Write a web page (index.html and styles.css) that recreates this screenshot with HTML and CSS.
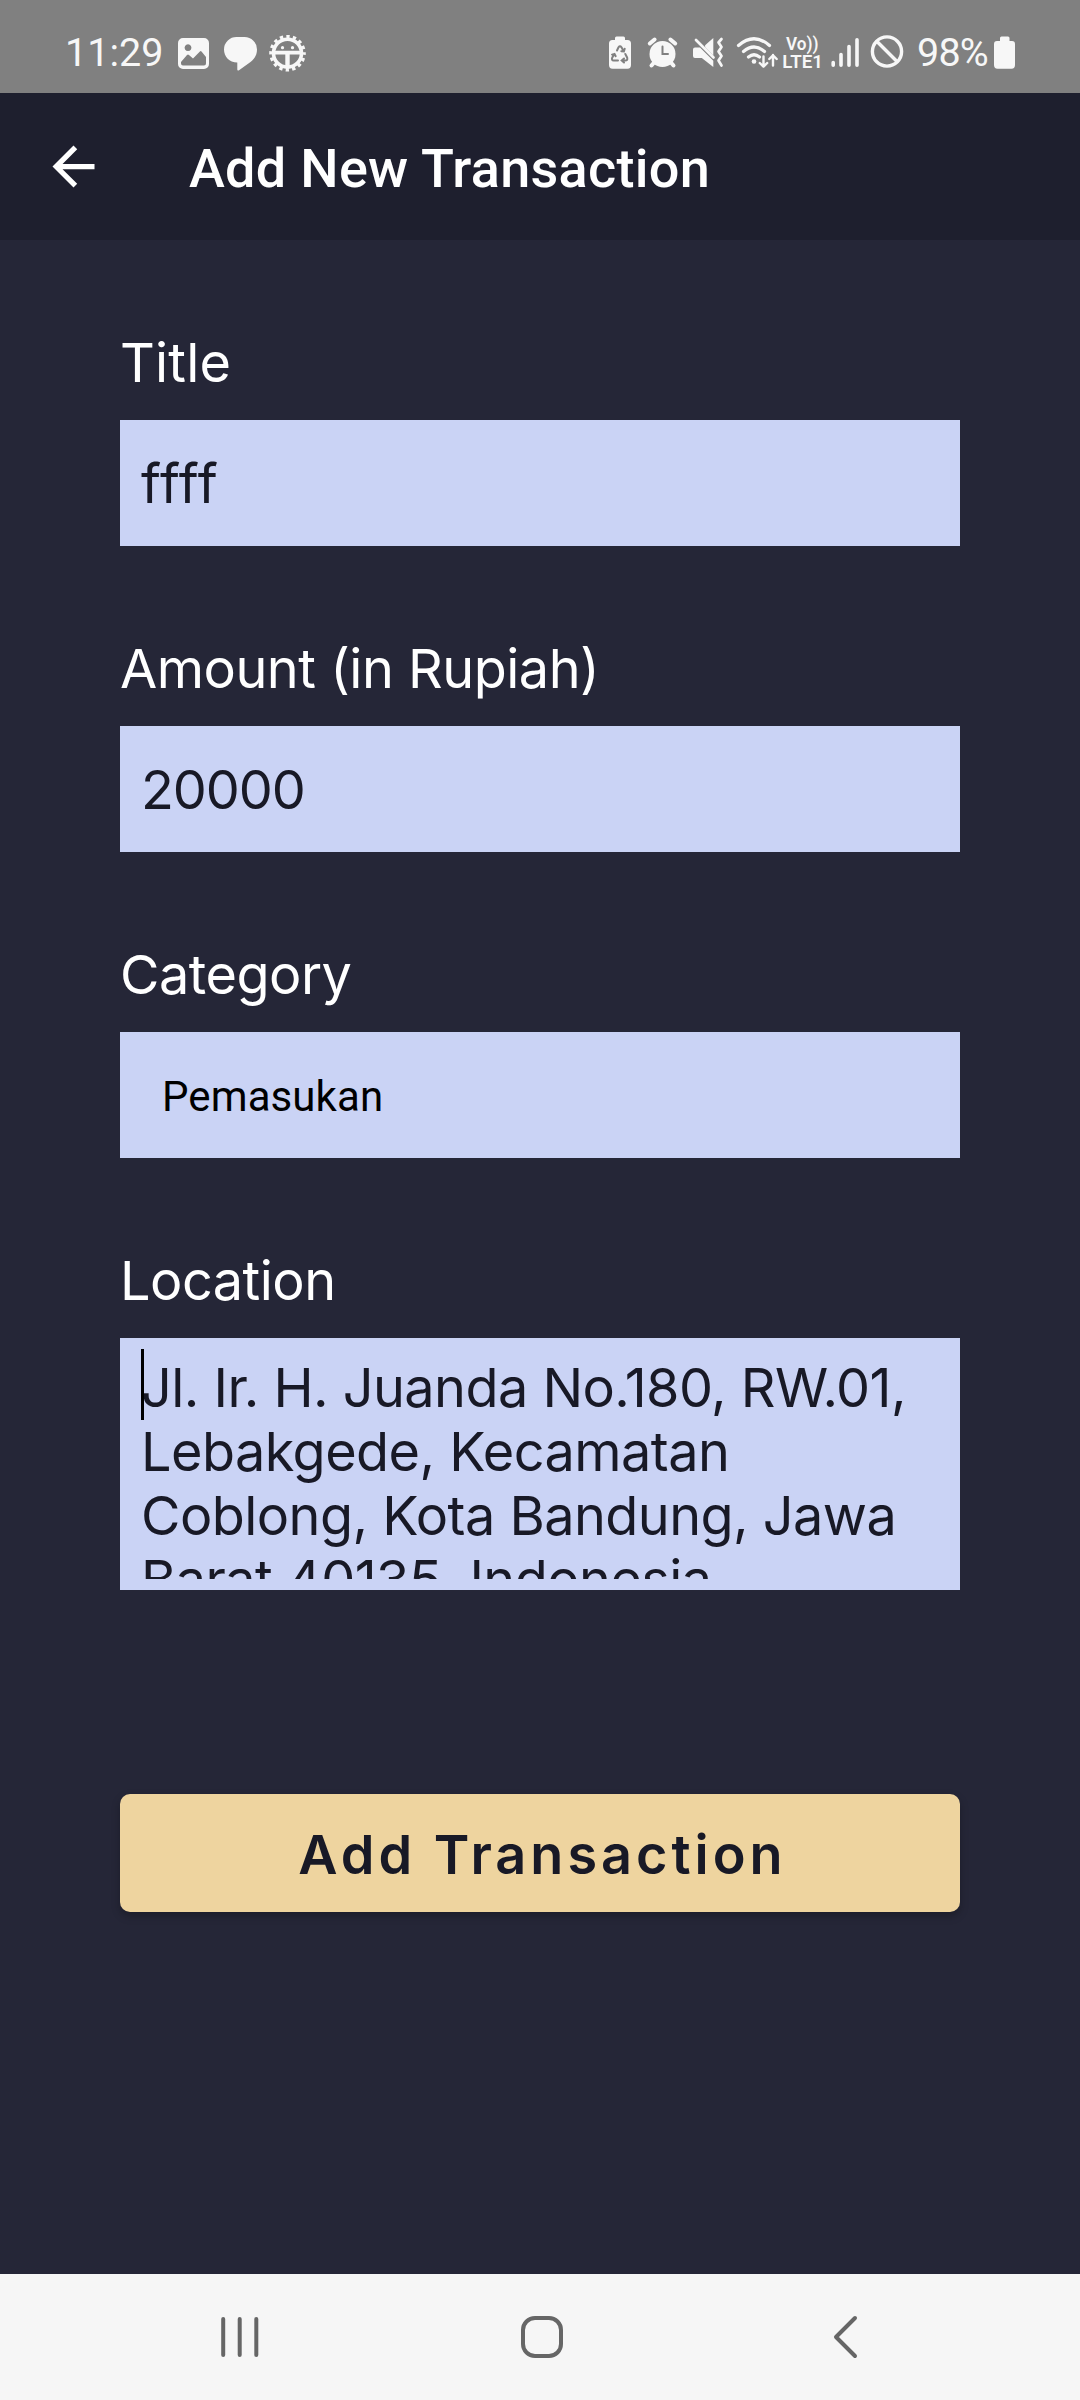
FILE: index.html
```html
<!DOCTYPE html>
<html lang="en">
<head>
<meta charset="utf-8">
<title>Add New Transaction</title>
<link rel="stylesheet" href="styles.css">
</head>
<body>
<div class="screen">
  <div class="status-bar">
    <div class="status-group">
      <span class="clock">11:29</span>
      <svg class="status-icon" width="31" height="93" viewBox="178 0 31 93">
        <path fill-rule="evenodd" d="M183 38h21a5 5 0 0 1 5 5v21a5 5 0 0 1-5 5h-21a5 5 0 0 1-5-5V43a5 5 0 0 1 5-5zM188 44.300a3.400 3.400 0 1 0 .01 0zM181 62v1.500q0 2 2 2h21q2 0 2-2V57l-4.500-5.500q-.8-.8-1.600 0L193 58.500l-4-3.500q-1-.8-2 0z"/>
      </svg>
      <svg class="status-icon" width="34" height="93" viewBox="224 0 34 93">
        <path d="M237 37h7.500a12.500 12.500 0 0 1 12.500 12.500c0 5.500-2.500 9-6.500 12.500l-11.500 8.200c-1 .6-1.700 0-1.700-1v-6.700c-8 0-13.300-6-13.300-13a12.500 12.500 0 0 1 13-12.500z"/>
      </svg>
      <svg class="status-icon" width="37" height="93" viewBox="269 0 37 93">
        <g transform="translate(287.500 53.200)">
          <circle r="14" fill="none" stroke="#f7f7f7" stroke-width="3.600"/>
          <circle r="16.400" fill="none" stroke="#f7f7f7" stroke-width="3.800" stroke-dasharray="3.300 3.140" stroke-dashoffset="1.650"/>
          <path d="M-13-2.400h26v3.800H2.200v12h-4.400v-12H-13z"/>
          <circle cx="-5" cy="-5.500" r="1.600"/><circle cx="5" cy="-5.500" r="1.600"/>
        </g>
      </svg>
    </div>
    <div class="status-group">
      <svg class="status-icon recycle" width="22" height="93" viewBox="609 0 22 93">
        <path d="M615 40v-2q0-1.500 1.500-1.500h7q1.500 0 1.500 1.500v2h2.500q3.500 0 3.500 3.500V65q0 3.700-3.500 3.700h-15Q609 68.700 609 65V43.500q0-3.500 3.500-3.500z"/>
        <path class="cut" d="M617 50.500l1.500-3.200q1.500-2 3 0l2 3.700M625.300 54l1.900 3.700q.7 2.800-2 2.800h-3.500M618 60.500h-4.200q-2.600-.3-1.600-2.800l2-3.700M621.300 51.200l2.600.2.800-2.700M624 58.500l-2.300 2 2.300 2M612 54.600l2.500-.7 1.200 2.300"/>
      </svg>
      <svg class="status-icon alarm" width="30" height="93" viewBox="648 0 30 93">
        <circle cx="662.500" cy="54" r="13"/>
        <path class="line" stroke-width="4" d="M649.800 43.500l4.800-4M675.200 43.500l-4.800-4M654.500 62l-3 3.500M670.500 62l3 3.500"/>
        <path class="cut" stroke-width="2.600" d="M662.500 46.500v7.500h5.500"/>
      </svg>
      <svg class="status-icon mute" width="31" height="93" viewBox="693 0 31 93">
        <path d="M695 47.500h5l13.300 13.300V67l-11.500-9H695q-2 0-2-2v-6.500q0-2 2-2zM713.300 38v17.500l-8.200-8.200 0-2z"/>
        <path class="line" stroke-width="2.700" d="M696 40l17.500 17.500M721.500 39l-3 3.500 3 4.500-3 4.500 3 4.500-3 4.500 3 5"/>
      </svg>
      <svg class="status-icon wifi" width="43" height="93" viewBox="736 0 43 93">
        <path class="line" stroke-width="3.200" d="M738.500 45.500q15.500-13.500 31 0M743.500 51.500q10.500-9 21 0M748.500 57q5.500-4.500 11 0"/>
        <circle cx="754" cy="61.500" r="2.300"/>
        <path class="line" stroke-width="2.400" d="M763.500 56.500v10M759.800 63l3.700 3.700 3.700-3.700M773 65.500V55M769.300 59l3.700-3.700 3.700 3.700"/>
      </svg>
      <svg class="status-icon volte" width="40" height="93" viewBox="783 0 40 93">
        <text x="786" y="50" font-size="18" textLength="32.500" lengthAdjust="spacingAndGlyphs">Vo))</text>
        <text x="782.300" y="67.800" font-size="18.500" textLength="40.700" lengthAdjust="spacingAndGlyphs">LTE1</text>
      </svg>
      <svg class="status-icon signal" width="28" height="93" viewBox="831 0 28 93">
        <path class="line" stroke-width="3.600" d="M833.200 62.500v2.800M841 54.500v10.800M849 46.500v18.800M857 39.800v25.500"/>
      </svg>
      <svg class="status-icon blocked" width="34" height="93" viewBox="870 0 34 93">
        <circle cx="887" cy="51.500" r="14.600" fill="none" stroke="#f7f7f7" stroke-width="3.400"/>
        <path class="line" stroke-width="3.400" d="M877 41.500l20 20"/>
      </svg>
      <span class="percent">98%</span>
      <svg class="status-icon" width="21" height="93" viewBox="994 0 21 93">
        <path d="M1000 41v-3q0-1.500 1.500-1.500h6.500q1.500 0 1.500 1.500v3h2.500q3 0 3 3v21q0 3.700-3.500 3.700h-14q-3.500 0-3.500-3.700V44q0-3 3-3z"/>
      </svg>
    </div>
  </div>

  <header class="app-bar">
    <svg class="back" width="63" height="63" viewBox="0 0 24 24"><path d="M20 11H7.830l5.590-5.590L12 4l-8 8 8 8 1.410-1.410L7.830 13H20v-2z"/></svg>
    <h1 class="app-title">Add New Transaction</h1>
  </header>

  <main class="form">
    <div class="field">
      <div class="label short">Title</div>
      <div class="input title-input">ffff</div>
    </div>
    <div class="field">
      <div class="label">Amount (in Rupiah)</div>
      <div class="input number">20000</div>
    </div>
    <div class="field">
      <div class="label">Category</div>
      <div class="input select">Pemasukan</div>
    </div>
    <div class="field">
      <div class="label">Location</div>
      <div class="input area"><div class="area-text"><span class="caret"></span>Jl. Ir. H. Juanda No.180, RW.01,<br>Lebakgede, Kecamatan<br>Coblong, Kota Bandung, Jawa<br>Barat 40135, Indonesia</div></div>
    </div>
    <button class="submit">Add Transaction</button>
  </main>

  <nav class="nav-bar">
    <svg width="40" height="60" viewBox="0 0 40 60"><path d="M3.200 12v36M19.700 12v36M36.300 12v36"/></svg>
    <svg class="home" width="44" height="60" viewBox="0 0 44 60"><rect x="3" y="11" width="38" height="38" rx="12"/></svg>
    <svg width="26" height="60" viewBox="0 0 26 60"><path d="M23 11L4 30l19 19"/></svg>
  </nav>
</div>
</body>
</html>
```
FILE: styles.css
```css
* { box-sizing: border-box; }

body {
  margin: 0;
  background: #252637;
}

.screen {
  display: flex;
  flex-direction: column;
  width: 1080px;
  height: 2400px;
  overflow: hidden;
  background: #252637;
  font-family: Inter, "Liberation Sans", sans-serif;
}

/* Status bar */
.status-bar {
  display: flex;
  justify-content: space-between;
  height: 93px;
  padding: 0 65px;
  background: #808080;
  color: #f7f7f7;
  font-family: Roboto, "Liberation Sans", sans-serif;
}

.status-group { display: flex; }

.status-icon {
  display: block;
  flex: none;
  overflow: visible;
  fill: #f7f7f7;
}

.status-icon + .status-icon { margin-left: 15px; }
.status-icon + .status-icon:nth-child(4) { margin-left: 12px; }
.status-icon .line { fill: none; stroke: #f7f7f7; stroke-linecap: round; stroke-linejoin: round; }
.status-icon .cut { fill: none; stroke: #808080; stroke-width: 2; stroke-linecap: round; }
.status-icon.alarm { margin-left: 17px; }
.status-icon.volte { margin-left: 4px; font-weight: 600; }
.status-icon.signal { margin-left: 8px; }
.status-icon.blocked { margin-left: 11px; }
.status-group:first-child .status-icon:nth-child(4) { margin-left: 11px; }

.clock,
.percent {
  font-size: 39.500px;
  line-height: 46px;
  padding-top: 30px;
  white-space: nowrap;
}

.clock { width: 113px; }
.percent { width: 77px; margin-left: 13px; letter-spacing: -0.8px; }

/* App bar */
.app-bar {
  display: flex;
  align-items: center;
  height: 147px;
  padding: 0 42px;
  background: #1e1f2e;
  color: #fff;
}

.back { fill: #fff; }

.app-title {
  margin: 0 0 0 84px;
  padding-top: 4px;
  font: 500 54px/62px Roboto, "Liberation Sans", sans-serif;
  letter-spacing: 0.3px;
  white-space: nowrap;
}

/* Form */
.form {
  display: flex;
  flex: 1;
  flex-direction: column;
  padding: 90px 120px 0;
}

.field { margin-bottom: 90px; }

.label {
  height: 90px;
  padding-top: 1px;
  color: #fff;
  font-size: 54px;
  line-height: 64px;
  letter-spacing: -0.5px;
  white-space: nowrap;
}

.short { letter-spacing: 0.2px; }

.input {
  display: flex;
  align-items: center;
  height: 126px;
  padding: 2px 21px 0;
  background: #cad3f5;
  color: #181926;
  font-size: 54px;
  line-height: 64px;
  letter-spacing: -0.55px;
}

.title-input { letter-spacing: 1px; }

.number { letter-spacing: -1.1px; }

.select {
  padding-top: 3px;
  padding-left: 42px;
  color: #000;
  font-family: Roboto, "Liberation Sans", sans-serif;
  font-size: 42px;
  letter-spacing: 0.1px;
}

.area {
  display: block;
  height: 252px;
  padding: 11px 21px;
}

.area-text {
  position: relative;
  height: 230px;
  padding-top: 7px;
  overflow: hidden;
  white-space: nowrap;
}

.caret {
  position: absolute;
  top: 0;
  left: 0;
  width: 3px;
  height: 71px;
  background: #000;
}

.submit {
  height: 118px;
  margin-top: 114px;
  padding: 3px 0 0 5px;
  border: 0;
  border-radius: 10px;
  background: #eed49f;
  box-shadow: 0 4px 9px rgba(0, 0, 0, 0.25);
  color: #181926;
  font: 600 54px/64px Inter, "Liberation Sans", sans-serif;
  letter-spacing: 4px;
}

/* System navigation */
.nav-bar {
  display: flex;
  align-items: center;
  justify-content: space-between;
  height: 126px;
  padding: 0 222px 0 220px;
  background: #f6f6f6;
}

.nav-bar svg {
  fill: none;
  stroke: #666;
  stroke-width: 4;
  stroke-linecap: round;
  stroke-linejoin: round;
}

.nav-bar .home { margin-right: 8.500px; }
```
